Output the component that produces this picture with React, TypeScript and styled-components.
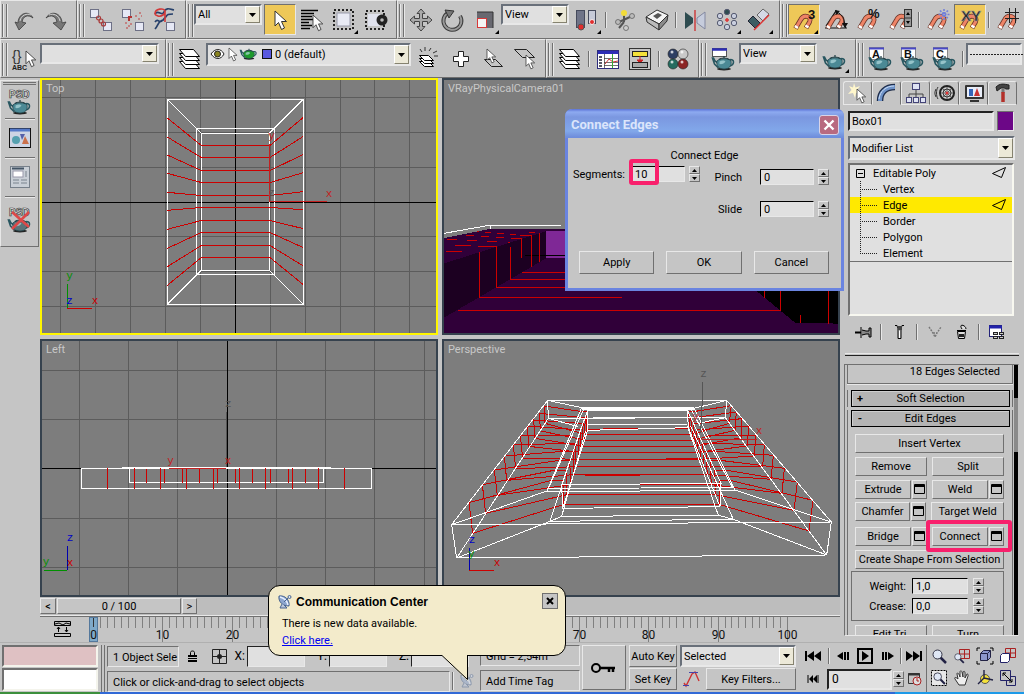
import React from "react";
import styled, { createGlobalStyle, css } from "styled-components";

const c = {
  face: "#c5c5c5",
  field: "#e0e0e0",
  light: "#e8e8e8",
  dark: "#707070",
  amber: "#eec858",
  pink: "#f8206c",
};

const GlobalStyle = createGlobalStyle`
  * { box-sizing: border-box; }
  body { margin: 0; background: ${c.face}; overflow: hidden; }
  body, button, input, select {
    font-family: Roboto, "Liberation Sans", Arial, sans-serif;
    font-size: 11px;
    line-height: 13px;
    color: #000;
  }
  button { padding: 0; margin: 0; white-space: nowrap; }
  input { min-width: 0; }
  svg { display: block; flex: none; }
`;

const raised = css`
  border: 1px solid;
  border-color: ${c.light} ${c.dark} ${c.dark} ${c.light};
`;
const sunken = css`
  border: 1px solid;
  border-color: ${c.dark} ${c.light} ${c.light} ${c.dark};
`;

/* ---------- frame ---------- */

const Window = styled.div`
  position: relative;
  display: flex;
  flex-direction: column;
  height: 100vh;
  min-height: 640px;
  background: ${c.face};
`;
const ToolRow = styled.div`
  display: flex;
  height: 39px;
  flex: none;
  overflow: hidden;
`;
const ToolGroup = styled.div<{ $grow?: boolean }>`
  display: flex;
  align-items: flex-start;
  flex: ${(p) => (p.$grow ? "1 1 0" : "none")};
  min-width: 0;
  padding: 3px 4px 0 1px;
  border: 1px solid;
  border-color: ${c.light} ${c.dark} ${c.dark} ${c.light};
  &:last-child { padding-right: 0; border-right: 0; }
`;
const Grip = styled.span`
  flex: none;
  width: 5px;
  height: 33px;
  margin-right: 1px;
  border: 1px solid ${c.dark};
  border-width: 0 1px;
  box-shadow: inset 1px 0 ${c.light}, 1px 0 ${c.light};
`;
const ToolButton = styled.button<{ $on?: boolean; $fly?: boolean }>`
  position: relative;
  display: flex;
  align-items: center;
  justify-content: center;
  flex: none;
  width: 32px;
  height: 31px;
  background: ${(p) => (p.$on ? c.amber : "transparent")};
  border: 1px solid;
  border-color: ${(p) => (p.$on ? `${c.dark} ${c.light} ${c.light} ${c.dark}` : "transparent")};
  ${(p) =>
    p.$fly &&
    css`
      &::after {
        content: "";
        position: absolute;
        right: 1px;
        bottom: 0;
        border: 2px solid;
        border-color: transparent #000 #000 transparent;
      }
    `}
`;
const Divider = styled.span<{ $h?: number }>`
  flex: none;
  width: 2px;
  height: ${(p) => p.$h ?? 16}px;
  margin: ${(p) => (p.$h ? "0 2px" : "8px 2px 0")};
  border-left: 1px solid ${c.dark};
  border-right: 1px solid ${c.light};
`;
const SelectBox = styled.label<{ $w?: number; $h?: number }>`
  display: flex;
  align-items: stretch;
  flex: ${(p) => (p.$w ? "none" : "1 1 0")};
  width: ${(p) => (p.$w ? p.$w + "px" : "auto")};
  min-width: 0;
  height: ${(p) => p.$h ?? 21}px;
  margin-right: 2px;
  background: ${c.field};
  border: 2px solid;
  border-color: #69707a ${c.light} ${c.light} #69707a;
`;
const NativeSelect = styled.select`
  flex: 1 1 0;
  min-width: 0;
  padding: 0 0 0 2px;
  appearance: none;
  border: 0;
  background: transparent;
  outline: 0;
`;
const Arrow = styled.span`
  display: flex;
  align-items: center;
  justify-content: center;
  flex: none;
  width: 15px;
  background: #ece9d8;
  border: 1px solid;
  border-color: #fff #85826f #85826f #fff;
`;

function Drop({ label, value, w, h, children }: { label: string; value: string; w?: number; h?: number; children?: React.ReactNode }) {
  return (
    <SelectBox $w={w} $h={h}>
      {children}
      <NativeSelect aria-label={label} defaultValue={value}>
        <option>{value}</option>
      </NativeSelect>
      <Arrow>
        <svg width="7" height="4" viewBox="0 0 7 4"><path d="M0 0h7L3.500 4z" /></svg>
      </Arrow>
    </SelectBox>
  );
}

/* ---------- icons ---------- */

const IconSvg = styled.svg`
  overflow: visible;
  text { font-family: "Liberation Sans", Arial, sans-serif; }
`;
const I = ({ children, s = 24, h }: { children: React.ReactNode; s?: number; h?: number }) => (
  <IconSvg width={s} height={h ?? s} viewBox={`0 0 ${s} ${h ?? s}`} fill="none" aria-hidden="true">{children}</IconSvg>
);
const Cursor = ({ x = 0, y = 0, k = 1 }: { x?: number; y?: number; k?: number }) => (
  <path transform={`translate(${x} ${y}) scale(${k})`} d="M0 0v15l3.500-3.500 3 7 3-1.500-3-6.500h5z" fill="#fff" stroke="#333" strokeWidth="1" />
);
const Magnet = () => (
  <g>
    <path d="M3.500 20.500L8.500 12C12 5.500 20.500 8.500 17.500 14L14 20" stroke="#6b3528" strokeWidth="4.800" />
    <path d="M3.800 20L8.500 12C12 5.500 20.500 8.500 17.500 14L14.300 19.500" stroke="#ee8467" strokeWidth="3.200" />
    <path d="M3.800 20l1.200-2M14.300 19.500l1.200-2" stroke="#fff" strokeWidth="3.600" />
  </g>
);
const Teapot = ({ x = 0, y = 0, fill = "#4b8995" }: { x?: number; y?: number; fill?: string }) => (
  <g transform={`translate(${x} ${y})`}>
    <ellipse cx="12" cy="14" rx="7" ry="1.500" fill="#222" />
    <path d="M6 8L3 6 1.500 3 .5 3l2 6 4 4M17 5c6-2 6 5 0 6" stroke="#285660" strokeWidth="1.600" />
    <path d="M5 6c2-3 12-3 14 0 1 5-2 8-7 8s-8-3-7-8z" fill={fill} stroke="#24464e" strokeWidth=".8" />
    <path d="M7 4.500c2-2 8-2 10 0M12 1v2" stroke="#1c3a42" strokeWidth="1.200" />
    <path d="M7.500 6.500c2-1.500 5-1.500 6 0-1 2-4 3-6 2.500z" fill="#b5dbe0" opacity=".7" />
  </g>
);
const Cube = ({ x, y, s = 8 }: { x: number; y: number; s?: number }) => (
  <rect x={x + 0.5} y={y + 0.5} width={s} height={s} fill="#e6e8f5" stroke="#6d7086" />
);
const Sheets = () => (
  <g stroke="#000" fill="#fff">
    {[14, 10, 6, 2].map((y) => <path key={y} d={`M1.500 ${y}.5h14l6 7h-14z`} />)}
  </g>
);

const ic = {
  undo: <I><path d="M6 15C6 6 16 1 21 10c-5-4-10-2-11 4l4 1-7 7-4-8z" fill="#777" stroke="#3c3c3c" strokeWidth=".8" /><path d="M8 13c1-6 7-8 11-6" stroke="#d0d0d0" /></I>,
  redo: <I><path d="M18 15C18 6 8 1 2 10c5-4 10-2 11 4l-4 1 8 7 5-8z" fill="#777" stroke="#3c3c3c" strokeWidth=".8" /><path d="M16 13c-1-6-7-8-11-6" stroke="#d0d0d0" /></I>,
  link: <I><Cube x={1} y={1} /><Cube x={14} y={14} /><g stroke="#a93a3a" strokeWidth="1.200"><circle cx="9.500" cy="10" r="2" /><circle cx="12" cy="13" r="2" /><circle cx="14.500" cy="16" r="2" /></g></I>,
  unlink: <I><Cube x={1} y={1} /><Cube x={14} y={14} /><path d="M8 13V9h3" stroke="#b53333" strokeWidth="2" /><path d="M14 8h2m2-3h2m-3 6h2m1-3h1M4 15h2m1 3h2m-4 2h2m2-4h2" stroke="#c26b6b" strokeWidth="1.500" /></I>,
  bind: <I><path d="M2 6c3-5 7 3 9-2s6-3 10-2M2 14c4-5 3 3 8-2s3-6 10-6M2 21c4-4 3-9 9-9" stroke="#26406b" strokeWidth="1.700" /><path d="M2 6c0-6 9-6 10-3s-4 6-7 5-3-1-3-2m10-3v11" stroke="#d33939" strokeWidth="1.600" /><Cube x={13} y={14} s={8} /></I>,
  arrow: <I><Cursor x={7} y={3} /></I>,
  byName: <I><path d="M1 2.500h17M1 5.500h13M1 8.500h11M1 11.500h13M1 14.500h8M1 17.500h11M1 20.500h9" stroke="#000" strokeWidth="1.300" /><Cursor x={13} y={7} k={0.85} /></I>,
  region: <I><rect x="2" y="2" width="19" height="19" stroke="#222" strokeWidth="2" strokeDasharray="2 2" /><rect x="5" y="5" width="13" height="13" fill="#e8eaf4" stroke="#9a9cac" /></I>,
  crossing: <I><rect x="2" y="3" width="18" height="18" stroke="#222" strokeWidth="2" strokeDasharray="2 2" /><rect x="4" y="6" width="12" height="12" fill="#dfe1ec" /><circle cx="18" cy="12" r="5.500" fill="#222" /><circle cx="18" cy="12" r="1.800" fill="#bbb" /></I>,
  move: <I><path d="M12 1l4 4.500h-2.500V10.500h5V8l4.500 4-4.500 4v-2.500h-5v5H16L12 23l-4-4.500h2.500v-5h-5V16L1 12l4.500-4v2.500h5v-5H8z" fill="#aaa" stroke="#444" /></I>,
  rotate: <I><path d="M7 5a9 9 0 1 0 12 3" stroke="#3c3c3c" strokeWidth="4" /><path d="M7 5a9 9 0 1 0 12 3" stroke="#999" strokeWidth="2" /><path d="M4 2l9 1-5 7z" fill="#777" stroke="#333" /></I>,
  scale: <I><rect x="4" y="4" width="16" height="16" fill="#686870" /><path d="M4 4h16v16" stroke="#333" /><rect x="4.500" y="10.500" width="9" height="9" fill="#f4f4f4" stroke="#d83838" /></I>,
  pivot: <I><rect x="1.500" y="2.500" width="8" height="17" fill="#6f7488" stroke="#454a5c" /><rect x="13.500" y="2.500" width="7" height="13" fill="#c6cad8" stroke="#454a5c" /><circle cx="6" cy="19" r="3" fill="#e12d2d" stroke="#555" /><circle cx="17" cy="14" r="2.500" fill="#e12d2d" stroke="#eee" /></I>,
  manip: <I><path d="M11 5v9M6 20l5-6M4 15l15-7" stroke="#555" strokeWidth="2" /><circle cx="11" cy="5" r="3" fill="#f2dc3a" /><circle cx="19" cy="8" r="2.500" fill="#bbb" stroke="#555" strokeWidth=".7" /><circle cx="5" cy="14" r="2.500" fill="#bbb" stroke="#555" strokeWidth=".7" /><circle cx="13" cy="20" r="2.500" fill="#ccc" stroke="#555" strokeWidth=".7" /></I>,
  keyb: <I><path d="M1 9L12 2l11 5-9 9z" fill="#f4f4f4" stroke="#333" /><path d="M1 9l13 7v6L2 14z" fill="#bbb" stroke="#333" /><path d="M14 16l9-9-1 6-8 9z" fill="#8b8b8b" stroke="#333" /><path d="M8 8l5-3 4 2-5 4z" fill="#555" /></I>,
  mirror: <I><path d="M2 4l8 6v5l-8 6z" fill="#2e4c50" /><path d="M22 4l-8 6v5l8 6z" fill="#c6ccdc" stroke="#8388a0" /><path d="M12 2v21" stroke="#cc2a2a" strokeWidth="1.300" /></I>,
  array: <I>{[[12, 4], [19, 8], [19, 15], [12, 19], [5, 15], [5, 8]].map(([x, y], i) => <circle key={i} cx={x} cy={y} r="2.700" fill={i ? "#c9cede" : "#2e4c50"} stroke="#555a70" />)}<path d="M12 10v4m-2-2h4" stroke="#d33" strokeWidth="1.500" /></I>,
  align: <I><path d="M1 13l5-5 7 7-5 5z" fill="#3d5d64" stroke="#223" /><path d="M10 7l6-6 6 5-6 7z" fill="#d5d9e6" stroke="#666" /><path d="M7 22L22 7" stroke="#d33" strokeWidth="1.400" /></I>,
  snap: <I><Magnet /><text x="16" y="11" fontSize="13" fontWeight="700" fill="#111">3</text></I>,
  angle: <I><path d="M1 20h21L12 3 2 18" stroke="#111" strokeWidth="1.200" /><Magnet /><path d="M13 4c5 2 8 8 8 15" stroke="#111" /><path d="M11 2l5 1-4 4zM18 15h6l-3 5z" fill="#111" /></I>,
  percent: <I><Magnet /><text x="12" y="10" fontSize="13" fontWeight="700" fill="#111">%</text></I>,
  spinner: <I><Magnet /><rect x="16.500" y="1.500" width="7" height="17" fill="#999" stroke="#333" /><path d="M17 10h6" stroke="#333" /><path d="M18 7l2-3 2 3zM18 13h4l-2 3z" fill="#000" /></I>,
  snow: <I><Magnet /><path d="M18 1v11M12.500 6.500h11M14 2.500l8 8M22 2.500l-8 8" stroke="#7480d8" strokeWidth="1.600" strokeDasharray="2 1" /></I>,
  xy: <I><Magnet /><text x="3" y="13" fontSize="15" fontWeight="700" fill="#222" stroke="#9a9a9a" strokeWidth=".6">XY</text></I>,
  gridSnap: <I><Magnet /><path d="M9 4.500h14M9 10.500h14M13.500 0v15M19.500 0v15" stroke="#222" /></I>,
  macro: <I><text x="0" y="14" fontSize="14" fill="#333">{"{}"}</text><text x="0" y="23" fontSize="7" fontWeight="700" fill="#222">ABC</text><Cursor x={14} y={4} k={0.85} /></I>,
  sheets: <I><Sheets /></I>,
  newLayer: <I><g stroke="#000" fill="#fff" transform="translate(0 2)">{[12, 9, 6].map((y) => <path key={y} d={`M2.500 ${y}.5h9l5 5h-9z`} />)}</g><path d="M5 5L3 2m5 2V0m4 4l2-3m2 5l4-2m-3 5h4" stroke="#333" /></I>,
  plus: <I><path d="M9.500 4.500h5v5h5v5h-5v5h-5v-5h-5v-5h5z" fill="#fff" stroke="#222" /></I>,
  pickLayer: <I><path d="M3.500 12.500h11l7 7h-11z" stroke="#222" /><Cursor x={6} y={2} k={0.75} /></I>,
  curLayer: <I><path d="M1.500 2.500h12l8 8h-12z" stroke="#222" /><Cursor x={13} y={8} k={0.75} /></I>,
  curves: <I><rect x="1.500" y="3.500" width="21" height="18" fill="#fff" stroke="#2d2d7d" /><path d="M2 5.500h20" stroke="#2d2db5" strokeWidth="3" /><path d="M3 10h3m-3 3h3m-3 3h3m-3 3h3" stroke="#223" strokeWidth="1.500" /><path d="M8.500 7v14M8 11.500h14M8 15.500h14M8 18.500h14" stroke="#333" strokeWidth=".7" /><path d="M9 17l4-5 4 3 5-1" stroke="#c33" /><path d="M16.500 7v14" stroke="#3a3" /></I>,
  schematic: <I><rect x="1.500" y="1.500" width="21" height="21" stroke="#333" /><rect x="4.500" y="4.500" width="15" height="5" fill="#f5e23a" stroke="#222" /><path d="M12 9v4m-3 0h6l-3 3z" stroke="#c22" fill="#c22" /><rect x="4.500" y="15.500" width="15" height="5" fill="#aaa" stroke="#222" /></I>,
  material: <I>{[[7, 7, "#2d3e63"], [17, 7, "#c9c9c9"], [7, 17, "#256c60"], [17, 17, "#8c2424"]].map(([x, y, f]) => <g key={`${x}-${y}`}><circle cx={x} cy={y} r="5" fill={f as string} stroke="#222" strokeWidth=".6" /><circle cx={(x as number) - 1} cy={(y as number) - 2} r="1.500" fill="#fff" opacity=".75" /></g>)}</I>,
  render: <I><rect x="1.500" y="1.500" width="14" height="8" fill="#fff" stroke="#555" /><path d="M1 2.500h15" stroke="#2d2db5" strokeWidth="2.500" /><Teapot x={1} y={8} /></I>,
  teapot: <I><Teapot y={7} /></I>,
};
const preset = (l: string) => (
  <I><rect x="1.500" y=".5" width="14" height="12" fill="#fff" stroke="#888" /><path d="M1 1.500h15" stroke="#4848c8" strokeWidth="2" /><Teapot x={1} y={8} /><text x="4" y="11" fontSize="11" fontWeight="700" fill="#111">{l}</text></I>
);

const Tool = ({ n, on, fly, children }: { n: string; on?: boolean; fly?: boolean; children: React.ReactNode }) => (
  <ToolButton aria-label={n} $on={on} $fly={fly}>{children}</ToolButton>
);

/* ---------- work area ---------- */

const Work = styled.main`
  display: grid;
  grid-template-columns: 40px minmax(0, 1fr) 184px;
  flex: 1 1 0;
  min-height: 0;
`;
const SideBar = styled.aside`
  align-self: start;
  display: flex;
  flex-direction: column;
  align-items: center;
  height: 167px;
  margin: 2px 1px 0 0;
  border: 1px solid;
  border-color: ${c.light} ${c.dark} ${c.dark} ${c.light};
`;
const SideGrip = styled.span`
  width: 33px;
  height: 3px;
  margin-top: 1px;
  border: 1px solid ${c.dark};
  border-width: 1px 0;
`;
const SideButton = styled.button`
  display: flex;
  align-items: center;
  justify-content: center;
  width: 30px;
  height: 39px;
  border: 0;
  border-bottom: 1px solid ${c.dark};
  box-shadow: 0 1px ${c.light};
  background: transparent;
  &:first-of-type { height: 34px; }
  &:last-child { border: 0; box-shadow: none; height: 46px; }
`;
const Center = styled.section`
  position: relative;
  display: flex;
  flex-direction: column;
  min-width: 0;
`;
const Views = styled.div`
  display: grid;
  grid-template: minmax(0, 257fr) minmax(0, 258fr) / 1fr 1fr;
  gap: 4px;
  flex: 1 1 0;
  min-height: 0;
`;
const View = styled.figure<{ $active?: boolean }>`
  position: relative;
  margin: 0;
  min-width: 0;
  overflow: hidden;
  background: #7d7d7d;
  border: 2px solid ${(p) => (p.$active ? "#fff600" : "#36424e")};
  > svg { width: 100%; height: 100%; }
`;
const ViewName = styled.figcaption`
  position: absolute;
  left: 4px;
  top: 2px;
  color: #c8c8c8;
`;
const Axis = styled.text`
  font: 33px "Liberation Mono", monospace;
  text-anchor: middle;
`;
const WHITE = { stroke: "#fff", strokeWidth: 3, fill: "none" };
const RED = { stroke: "#cc0000", strokeWidth: 3, fill: "none" };

const lerpX = (a: number[], b: number[], y: number) => a[0] + ((b[0] - a[0]) * (y - a[1])) / (b[1] - a[1]);

function Scene({ box, children }: { box: string; children: React.ReactNode }) {
  return (
    <svg viewBox={box} preserveAspectRatio="xMidYMid slice" shapeRendering="crispEdges" aria-hidden="true">{children}</svg>
  );
}

function TopView() {
  const inner = [208, 244, 283, 319, 358, 394, 433, 469, 508, 544];
  const outer = [126, 183, 237, 292, 349, 403, 460, 517, 572, 628];
  return (
    <View $active>
      <Scene box="126 12 1182 759">
        <g stroke="#5c5c5c" strokeWidth="3">
          {[181, 286, 391, 496, 601, 811, 916, 1021, 1123, 1228].map((x) => <path key={x} d={`M${x}.5 0V800`} />)}
          {[64, 169, 274, 481, 586, 691].map((y) => <path key={y} d={`M0 ${y}.5H1320`} />)}
        </g>
        <path d="M706.500 0V800M0 379.500H1320" stroke="#000" strokeWidth="3" />
        <g {...WHITE}>
          <path d="M502.500 70.500H910.500V685.500H502.500zM589.500 157.500H823.500V595.500H589.500zM604.500 172.500H808.500V583.500H604.500z" />
          <path d="M502 70L604 172M910 70L808 172M502 685L604 583M910 685L808 583" />
        </g>
        <g {...RED}>
          {inner.map((y, i) => <path key={y} d={`M502 ${outer[i]}L604 ${y}.5H810L910 ${outer[i] - 2}`} />)}
          <path d="M808.500 205V376.500H981" stroke="#c42020" />
        </g>
        <Axis x="815" y="188" fill="#c42020">y</Axis>
        <Axis x="987" y="363" fill="#c42020">x</Axis>
        <Axis x="815" y="361" fill="#555">z</Axis>
        <path d="M202.500 624V697" stroke="#009000" strokeWidth="3" />
        <path d="M202 697.500H276" stroke="#c00" strokeWidth="3" />
        <Axis x="209" y="608" fill="#009000">y</Axis>
        <Axis x="209" y="684" fill="#0000c8">z</Axis>
        <Axis x="285" y="684" fill="#c00">x</Axis>
      </Scene>
      <ViewName>Top</ViewName>
    </View>
  );
}

function CameraView() {
  return (
    <View>
      <Scene box="312 12 1182 759">
        <path d="M300 489L450 459H1500V780H300z" fill="#300039" />
        <path d="M300 566L620 465V546L300 732z" fill="#1c0021" />
        <path d="M618 465H1494V546H618z" fill="#7f2896" />
        <path d="M555 539H1494" stroke="#000" strokeWidth="3" />
        <path d="M1250 645L1365 740L1500 743V645z" fill="#000" />
        <path d="M312 472L445 448.500H663M451.500 448V459" {...WHITE} />
        <g {...RED}>
          <path d="M354 703.500H1321.500V645M418.500 528V664.500H846M414 511.500H469.500V634.500H900M511.500 513V610.500H900M546 589.500H900M514 487.500H544.500V546M541 478.500H574.500V573M598.500 470V559" />
          <path d="M320 490.500H351M378 478.500H402M411 466.500H417M345 508.500H393M318 526.500H366M381 493.500H411M423 481.500H447M435 469.500H453M441 496.500H471M468 484.500H492M471 472.500H492M510 475.500H528M567 469.500H585M504 499.500H511" />
          <path d="M1273.500 645V667M1465.500 645V743M1381.500 717V740" />
        </g>
      </Scene>
      <ViewName>VRayPhysicalCamera01</ViewName>
    </View>
  );
}

function LeftView() {
  return (
    <View>
      <Scene box="126 15 1182 762">
        <g stroke="#5c5c5c" strokeWidth="3">
          {[238, 385, 532, 829, 976, 1123, 1273].map((x) => <path key={x} d={`M${x}.5 0V800`} />)}
          {[103, 250, 547, 694].map((y) => <path key={y} d={`M0 ${y}.5H1320`} />)}
        </g>
        <path d="M682.500 0V800M0 397.500H1320" stroke="#000" strokeWidth="3" />
        <path d="M679.500 228V397" stroke="#555" strokeWidth="3" />
        <path d="M244.500 397.500H1114.500V457.500H244.500zM388.500 397.500H970.500V439.500H388.500zM366 394.500H993" {...WHITE} />
        <g {...RED}>
          {[322, 403, 481, 559, 640, 718, 796, 877, 955, 1033].map((x) => <path key={x} d={`M${x}.5 396V458`} />)}
          {[439, 493, 547, 598, 652, 706, 757, 811, 865, 916].map((x) => <path key={x} d={`M${x}.5 399V440`} />)}
          <path d="M508 397.500H679" stroke="#c42020" />
        </g>
        <Axis x="512" y="383" fill="#c42020">y</Axis>
        <Axis x="684" y="384" fill="#c42020">x</Axis>
        <Axis x="685" y="213" fill="#555">z</Axis>
        <path d="M202.500 630V703" stroke="#0000b0" strokeWidth="3" />
        <path d="M132 703.500H202" stroke="#009000" strokeWidth="3" />
        <Axis x="138" y="688" fill="#009000">y</Axis>
        <Axis x="210" y="690" fill="#c00">x</Axis>
        <Axis x="210" y="615" fill="#0000c8">z</Axis>
      </Scene>
      <ViewName>Left</ViewName>
    </View>
  );
}

const LT = [[312, 210], [297, 232], [281, 252], [262, 270], [241, 298], [220, 327], [193, 360], [163, 402], [127, 446], [87, 500]];
const LB = [[315, 262], [302, 285], [285, 307], [266, 331], [248, 366], [227, 398], [200, 433], [172, 478], [137, 532], [98, 592]];
const RT = [[874, 209], [889, 228], [905, 248], [927, 270], [948, 298], [973, 327], [1000, 358], [1033, 397], [1072, 438], [1119, 493]];
const RB = [[868, 262], [885, 283], [903, 305], [921, 330], [942, 360], [968, 392], [993, 430], [1026, 472], [1062, 523], [1107, 585]];
const RIM = [226, 243, 261, 280, 300, 322, 346, 373, 402, 433];
const FLOOR = [296, 312, 330, 349, 370, 392, 416, 446, 476, 505];

function PerspectiveView() {
  return (
    <View>
      <Scene box="12 15 1182 762">
        <g {...RED}>
          {RIM.map((y, i) => {
            const f = FLOOR[i];
            const rl = lerpX([425, 215], [320, 465], y);
            const rr = lerpX([762, 217], [885, 462], y);
            const il = lerpX([443, 222], [365, 443], y);
            const ir = lerpX([742, 222], [843, 442], y);
            const fl = lerpX([443, 283], [368, 517], f);
            const fr = lerpX([745, 275], [840, 512], f);
            return (
              <path
                key={y}
                d={`M${fl} ${f}L${LB[i]}L${LT[i]}L${rl} ${y}H${il}L${fl} ${f}H${fr}L${RB[i]}L${RT[i]}L${rr} ${y}H${ir}L${fr} ${f}`}
              />
            );
          })}
          <path d="M443 280L745 277M505 313H700M540 331H648M678 367H780M435 417H600M385 446H840" strokeWidth="4" />
        </g>
        <g {...WHITE}>
          <path d="M35 566L323 193H860L1174 558zM50 666L35 566M1174 558L1160 657L50 666L325 247L856 245L1160 657M323 193L325 247M860 193L856 245" />
          <path d="M323 193L425 215M860 193L762 217M35 566L320 465M1174 558L885 462M50 666L330 556M1160 657L880 550M325 247L415 272M856 245L775 262" />
          <path d="M320 467L425 215M762 217L885 462M320 459L885 453M320 467L885 463M325 458L432 218M878 455L752 218" />
          <path d="M425 217H762" strokeWidth="7" />
          <path d="M365 446L443 222H742L843 442zM368 517L443 283M745 275L840 512L368 517L365 446M840 512L843 442M443 222V283L745 275L742 222" />
          <path d="M330 556L880 550L835 538L365 541zM330 556L425 270M365 541L437 285M880 550L752 270M835 538L742 270M460 244H742M443 265H742" />
        </g>
        <path d="M787.500 138V180L782 290" stroke="#555" strokeWidth="3" fill="none" />
        <path d="M785 310.500H951" stroke="#c42020" strokeWidth="3" />
        <Axis x="791" y="123" fill="#555">z</Axis>
        <Axis x="957" y="293" fill="#c42020">x</Axis>
        <Axis x="767" y="253" fill="#c42020">y</Axis>
        <path d="M88.500 635V703" stroke="#0000b0" strokeWidth="3" />
        <path d="M88 703.500H161" stroke="#c00" strokeWidth="3" />
        <Axis x="96" y="620" fill="#0000c8">z</Axis>
        <Axis x="95" y="663" fill="#009000">y</Axis>
        <Axis x="171" y="690" fill="#c00">x</Axis>
      </Scene>
      <ViewName>Perspective</ViewName>
    </View>
  );
}

const Slider = styled.div`
  display: flex;
  flex: none;
  gap: 1px;
  height: 19px;
  padding: 1px 0;
  background: #bdbdbd;
  border-bottom: 1px solid ${c.light};
`;
const SliderButton = styled.button<{ $w: number }>`
  ${raised}
  width: ${(p) => p.$w}px;
  background: ${c.face};
`;
const TrackBar = styled.div`
  display: flex;
  flex: none;
  height: 26px;
  border-top: 1px solid ${c.dark};
`;
const CurveToggle = styled.button`
  display: flex;
  align-items: center;
  justify-content: center;
  flex: none;
  width: 44px;
  border: 0;
  background: transparent;
`;
const Ruler = styled.svg`
  flex: 1 1 0;
  min-width: 0;
  height: 25px;
  text { font-size: 12px; text-anchor: middle; fill: #111; }
`;

function TimeRuler() {
  const x = (f: number) => Math.round(9 + f * 6.94) + 0.5;
  return (
    <Ruler viewBox="0 0 756 25" preserveAspectRatio="xMinYMin meet" aria-label="Track bar">
      <g shapeRendering="crispEdges" stroke="#808080">
        {Array.from({ length: 101 }, (_, f) => (
          <path key={f} d={`M${x(f)} 0V${f % 10 ? 11 : 25}`} />
        ))}
      </g>
      <rect x="5.500" y=".5" width="8" height="24" fill="#7fa9c8" stroke="#54789c" />
      <path d="M9.500 1v9" stroke="#333" />
      {Array.from({ length: 11 }, (_, i) => (
        <text key={i} x={x(i * 10)} y="22">{i * 10}</text>
      ))}
    </Ruler>
  );
}

/* ---------- dialog ---------- */

const Dialog = styled.form`
  position: absolute;
  right: -4px;
  top: 31px;
  z-index: 2;
  width: 279px;
  height: 182px;
  display: flex;
  flex-direction: column;
  background: ${c.face};
  border: 3px solid #6a84e0;
  border-top: 0;
  border-radius: 7px 7px 0 0;
`;
const DialogTitle = styled.header`
  display: flex;
  align-items: center;
  justify-content: space-between;
  flex: none;
  height: 29px;
  margin: 0 -3px;
  padding: 3px 5px 0 6px;
  border-radius: 7px 7px 0 0;
  background: linear-gradient(#5b72d6 0, #8daaf0 3px, #7b97e0 8px, #82a8ea 22px, #6f8edc 28px);
  color: #dbe5fb;
  font-weight: 700;
  font-size: 13px;
  line-height: 16px;
`;
const CloseX = styled.button`
  display: flex;
  align-items: center;
  justify-content: center;
  width: 20px;
  height: 20px;
  border: 1px solid #d8d4e8;
  border-radius: 3px;
  background: #b86a80;
`;
const DialogBody = styled.div`
  display: grid;
  grid-template-columns: 58px 70px 1fr auto;
  grid-template-rows: 16px 24px 36px;
  align-items: center;
  padding: 9px 12px 0 5px;
  row-gap: 2px;
`;
const Caption = styled.h2`
  grid-column: 1 / -1;
  margin: 0 0 0 7px;
  text-align: center;
  font-size: 11px;
  font-weight: 400;
`;
const Label = styled.label<{ $col?: number }>`
  grid-column: ${(p) => p.$col ?? "auto"};
  justify-self: ${(p) => (p.$col ? "end" : "start")};
  margin-right: ${(p) => (p.$col ? 18 : 0)}px;
  margin-bottom: ${(p) => (p.$col ? 0 : 6)}px;
`;
const SpinField = styled.span<{ $lift?: boolean }>`
  position: relative;
  display: flex;
  align-items: center;
  gap: 4px;
  margin-bottom: ${(p) => (p.$lift ? 6 : 0)}px;
`;
const NumInput = styled.input<{ $w: number }>`
  width: ${(p) => p.$w}px;
  height: 16px;
  padding: 0 3px;
  background: ${c.field};
  border: 1px solid;
  border-color: #000 ${c.light} ${c.light} #000;
  border-radius: 0;
`;
const Spins = styled.span`
  display: grid;
  width: 11px;
  height: 16px;
`;
const SpinBtn = styled.button`
  ${raised}
  display: flex;
  align-items: center;
  justify-content: center;
  background: ${c.face};
  height: 8px;
`;
const Spinner = () => (
  <Spins>
    <SpinBtn type="button" aria-label="Increase"><svg width="5" height="3"><path d="M0 3h5L2.500 0z" /></svg></SpinBtn>
    <SpinBtn type="button" aria-label="Decrease"><svg width="5" height="3"><path d="M0 0h5L2.500 3z" /></svg></SpinBtn>
  </Spins>
);
const Mark = styled.span`
  position: absolute;
  left: -2px;
  top: -7px;
  width: 30px;
  height: 26px;
  border: 4px solid ${c.pink};
  border-radius: 3px;
  pointer-events: none;
`;
const DialogButtons = styled.div`
  display: flex;
  gap: 12px;
  margin: auto 12px 14px 11px;
`;
const PushButton = styled.button<{ $h?: number }>`
  ${raised}
  flex: 1 1 0;
  min-width: 0;
  height: ${(p) => p.$h ?? 19}px;
  background: ${c.face};
  overflow: hidden;
`;

function ConnectDialog() {
  return (
    <Dialog aria-label="Connect Edges" onSubmit={(e) => e.preventDefault()}>
      <DialogTitle>
        Connect Edges
        <CloseX type="button" aria-label="Close">
          <svg width="12" height="12" viewBox="0 0 12 12"><path d="M1.500 1.500l9 9m0-9l-9 9" stroke="#fff" strokeWidth="2.400" /></svg>
        </CloseX>
      </DialogTitle>
      <DialogBody>
        <Caption>Connect Edge</Caption>
        <Label htmlFor="seg">Segments:</Label>
        <SpinField $lift>
          <NumInput id="seg" $w={54} defaultValue="10" />
          <Spinner />
          <Mark />
        </SpinField>
        <Label htmlFor="pinch" $col={3}>Pinch</Label>
        <SpinField><NumInput id="pinch" $w={54} defaultValue="0" /><Spinner /></SpinField>
        <Label htmlFor="slide" $col={3}>Slide</Label>
        <SpinField><NumInput id="slide" $w={54} defaultValue="0" /><Spinner /></SpinField>
      </DialogBody>
      <DialogButtons>
        <PushButton $h={23}>Apply</PushButton>
        <PushButton $h={23}>OK</PushButton>
        <PushButton $h={23}>Cancel</PushButton>
      </DialogButtons>
    </Dialog>
  );
}

/* ---------- command panel ---------- */

const Panel = styled.aside`
  position: relative;
  display: flex;
  flex-direction: column;
  min-width: 0;
  min-height: 0;
  padding-top: 3px;
`;
const Tabs = styled.nav`
  display: flex;
  flex: none;
  height: 25px;
  padding-left: 3px;
`;
const Tab = styled.button<{ $on?: boolean }>`
  display: flex;
  align-items: center;
  justify-content: center;
  width: 29px;
  height: 24px;
  background: ${c.face};
  border: 1px solid;
  border-color: ${c.light} ${c.dark} ${(p) => (p.$on ? c.face : c.light)} ${c.light};
  border-radius: 3px 3px 0 0;
`;
const NameRow = styled.div`
  display: flex;
  gap: 3px;
  flex: none;
  height: 20px;
  margin: 5px 10px 0 8px;
`;
const NameInput = styled.input`
  flex: 1 1 0;
  padding: 0 2px;
  background: ${c.field};
  border: 2px solid;
  border-color: #222 ${c.light} ${c.light} #222;
`;
const Swatch = styled.button`
  width: 17px;
  background: #6c0787;
  ${sunken}
`;
const ListRow = styled.div`
  display: flex;
  flex: none;
  margin: 5px 7px 0 8px;
`;
const Stack = styled.ul`
  flex: none;
  height: 153px;
  margin: 3px 10px 0 8px;
  padding: 0;
  list-style: none;
  background: ${c.field};
  border: 2px solid;
  border-color: ${c.dark} #f8f8f0 #f8f8f0 ${c.dark};
`;
const StackRow = styled.li<{ $on?: boolean; $child?: boolean; $last?: boolean }>`
  display: flex;
  align-items: center;
  gap: ${(p) => (p.$child ? 6 : 8)}px;
  height: ${(p) => (p.$last ? 17 : 16)}px;
  padding: 0 5px 0 ${(p) => (p.$child ? 10 : 6)}px;
  background: ${(p) => (p.$on ? "#ffe900" : "transparent")};
  ${(p) => p.$last && css`border-bottom: 1px solid ${c.dark};`}
  > span { flex: 1; }
`;
const ToolsRow = styled.div`
  display: flex;
  align-items: center;
  flex: none;
  height: 24px;
  margin: 4px 16px 0 12px;
  justify-content: space-between;
`;
const PlainButton = styled.button<{ $w?: number }>`
  display: flex;
  align-items: center;
  justify-content: center;
  flex: none;
  width: ${(p) => p.$w ?? 22}px;
  height: 22px;
  border: 0;
  background: transparent;
`;
const Rule = styled.hr`
  flex: none;
  width: 174px;
  height: 3px;
  margin: 9px 0 8px 5px;
  border: 0;
  border-top: 1px solid ${c.light};
  border-bottom: 1px solid #222;
`;
const Rollouts = styled.div`
  display: flex;
  flex: 1 1 0;
  min-height: 0;
  margin: 0 5px 6px 4px;
  overflow: hidden;
  border: 1px solid;
  border-color: ${c.dark} transparent ${c.light} ${c.dark};
`;
const RollBody = styled.div`
  flex: 1 1 0;
  min-width: 0;
  padding: 0 1px 0 2px;
`;
const ScrollTrack = styled.div`
  flex: none;
  width: 4px;
  padding-top: 33px;
  background: #000;
`;
const ScrollThumb = styled.div`
  height: 54px;
  background: #8a8a8a;
`;
const SelectedInfo = styled.div`
  height: 19px;
  padding: 0 12px;
  text-align: right;
  border: 1px solid ${c.dark};
  border-top: 0;
  box-shadow: 0 1px ${c.light};
`;
const RollHead = styled.button`
  display: grid;
  grid-template-columns: 16px 1fr 16px;
  align-items: center;
  width: 159px;
  height: 17px;
  margin: 0 0 0 3px;
  background: #b4b4b4;
  border: 1px solid #000;
  box-shadow: inset 1px 1px #cfcfcf;
`;
const RollTitle = styled.div<{ $gap: number }>`
  display: flex;
  margin-top: ${(p) => p.$gap}px;
  border: 1px solid ${c.dark};
  border-width: 0 1px;
  height: 17px;
`;
const RollGroup = styled.div`
  display: flex;
  flex-direction: column;
  padding: 7px 8px 0 7px;
  border: 1px solid ${c.dark};
  border-width: 0 1px;
`;
const ButtonRow = styled.div<{ $gap?: number }>`
  display: flex;
  gap: 5px;
  margin-bottom: ${(p) => p.$gap ?? 4}px;
`;
const Pair = styled.div`
  position: relative;
  display: flex;
  flex: 1 1 0;
  gap: 1px;
  min-width: 0;
`;
const SettingsButton = styled.button`
  ${raised}
  display: flex;
  align-items: center;
  justify-content: center;
  flex: none;
  width: 15px;
  height: 19px;
  background: ${c.face};
`;
const ConnectMark = styled.span`
  position: absolute;
  inset: -7px -8px -6px -6px;
  border: 4px solid ${c.pink};
  border-radius: 3px;
  pointer-events: none;
`;
const WeightBox = styled.div`
  display: grid;
  grid-template-columns: 54px auto;
  justify-content: start;
  align-items: center;
  gap: 4px 6px;
  height: 50px;
  margin: -2px 0 4px -4px;
  padding: 6px 0;
  border: 1px solid ${c.dark};
  > label { text-align: right; }
`;
const Weights = styled(SpinField)`
  gap: 5px;
`;

const Win = () => (
  <svg width="11" height="11" viewBox="0 0 11 11"><path d="M.5 .5h10v9H.5zM0 2h11" fill="none" stroke="#000" /><path d="M0 1h11v2H0z" /></svg>
);
const WithSettings = ({ n, marked }: { n: string; marked?: boolean }) => (
  <Pair>
    <PushButton>{n}</PushButton>
    <SettingsButton aria-label={`${n} settings`}><Win /></SettingsButton>
    {marked && <ConnectMark />}
  </Pair>
);
const StackFlag = () => (
  <svg width="15" height="12" viewBox="0 0 15 12"><path d="M.5 6.500L13.500 .5L9.500 10.500z" fill="none" stroke="#000" /></svg>
);
const Branch = ({ last }: { last?: boolean }) => (
  <svg width="17" height="16" viewBox="0 0 17 16"><path d={`M.5 0V${last ? 8 : 16}M0 8.500H17`} stroke="#222" strokeDasharray="1 1" /></svg>
);

function CommandPanel() {
  return (
    <Panel>
      <Tabs>
        <Tab aria-label="Create"><I s={20}><path d="M6 0l1.500 4.500L12 3 9 7l4 3-5 0-1 5-2-5-5 1 3.500-4L1 3l4 1.500z" fill="#fff7cc" /><Cursor x={9} y={6} k={0.75} /></I></Tab>
        <Tab $on aria-label="Modify"><I s={20}><path d="M3 18C3 9 9 4 18 4" stroke="#1e2c4a" strokeWidth="6.500" /><path d="M3 18C3 9 9 4 18 4" stroke="#6f93c8" strokeWidth="4" /><path d="M2 16C3 8 9 3 17 3" stroke="#c9dcf5" /></I></Tab>
        <Tab aria-label="Hierarchy"><I s={20}><path d="M10 6v5M3 15v-4h14v4M10 11v4" stroke="#444" /><rect x="6.500" y=".5" width="7" height="6" fill="#dfe3f3" stroke="#447" /><rect x=".5" y="14.500" width="5" height="5" fill="#dfe3f3" stroke="#447" /><rect x="7.500" y="14.500" width="5" height="5" fill="#dfe3f3" stroke="#447" /><rect x="14.500" y="14.500" width="5" height="5" fill="#dfe3f3" stroke="#447" /></I></Tab>
        <Tab aria-label="Motion"><I s={20}><circle cx="12" cy="10" r="7" fill="#d0d0d0" stroke="#222" strokeWidth="2" /><circle cx="12" cy="10" r="4" stroke="#333" /><path d="M12 4v12M6 10h12M8 6l8 8M16 6l-8 8" stroke="#444" strokeWidth=".8" /><circle cx="12" cy="10" r="1.500" fill="#d33" /><path d="M3 4c-2 3-2 9 0 12M1 6c-1.500 3-1.500 5 0 8" stroke="#333" /></I></Tab>
        <Tab aria-label="Display"><I s={20}><rect x="1" y="2" width="19" height="14" rx="1" fill="#333" /><rect x="3" y="4" width="15" height="10" fill="#e9eef9" /><rect x="5" y="6" width="4" height="7" fill="#3565b8" /><path d="M10 13l3-8 3 8z" fill="#c93434" /><path d="M6 18h9" stroke="#333" strokeWidth="2" /></I></Tab>
        <Tab aria-label="Utilities"><I s={20}><path d="M3 4c4-4 8-3 13-2v4h-3l-2-1H8L4 8z" fill="#444" stroke="#222" /><path d="M10 5v5" stroke="#777" strokeWidth="3" /><path d="M10 9v10" stroke="#b3302a" strokeWidth="3.500" /></I></Tab>
      </Tabs>
      <NameRow>
        <NameInput aria-label="Object name" defaultValue="Box01" />
        <Swatch aria-label="Object color" />
      </NameRow>
      <ListRow><Drop label="Modifier List" value="Modifier List" h={24} /></ListRow>
      <Stack>
        <StackRow><I s={9}><path d="M.5 .5h8v8h-8zM2 4.500h5" stroke="#000" /></I><span>Editable Poly</span><StackFlag /></StackRow>
        {["Vertex", "Edge", "Border", "Polygon", "Element"].map((n) => (
          <StackRow key={n} $child $on={n === "Edge"} $last={n === "Element"}>
            <Branch last={n === "Element"} />
            <span>{n}</span>
            {n === "Edge" && <StackFlag />}
          </StackRow>
        ))}
      </Stack>
      <ToolsRow>
        <PlainButton aria-label="Pin stack"><I s={17} h={12}><path d="M0 6.500h6" stroke="#000" strokeWidth="2" /><path d="M6 1v11M7 4l4 1h3V2l2 0v9h-2V8h-3L7 9" stroke="#000" fill="#888" /></I></PlainButton>
        <Divider $h={16} />
        <PlainButton aria-label="Show end result"><I s={9} h={14}><path d="M0 .5h2l1 3v10h3v-10l1-3h2" stroke="#000" /><path d="M2 1h5v4H3z" fill="#444" /><path d="M4 6h1v7H4z" fill="#fff" /></I></PlainButton>
        <Divider $h={16} />
        <PlainButton aria-label="Make unique"><I s={15} h={13}><path d="M1 1l4 6 2 4 2-4 4-6M5 7h4" stroke="#777" strokeDasharray="2 1" strokeWidth="1.400" /></I></PlainButton>
        <PlainButton aria-label="Remove modifier"><I s={11} h={14}><path d="M1.500 6.500h8l-1 7h-6zM1 5.500h9M6 4c-4-6 4-4 4 0" stroke="#000" fill="#ddd" /><path d="M3 9h5v3H3z" fill="#222" /></I></PlainButton>
        <Divider $h={16} />
        <PlainButton aria-label="Configure sets"><I s={16} h={14}><rect x=".5" y=".5" width="12" height="11" fill="#fff" stroke="#227" /><path d="M0 2h13" stroke="#22a" strokeWidth="3" /><g fill="#ccc" stroke="#222"><rect x="4.500" y="7.500" width="4" height="2" /><rect x="10.500" y="7.500" width="4" height="2" /><rect x="4.500" y="11.500" width="4" height="2" /><rect x="10.500" y="11.500" width="4" height="2" /></g></I></PlainButton>
      </ToolsRow>
      <Rule />
      <Rollouts>
        <RollBody>
          <SelectedInfo>18 Edges Selected</SelectedInfo>
          <RollTitle $gap={6}><RollHead><b>+</b>Soft Selection</RollHead></RollTitle>
          <RollTitle $gap={3}><RollHead><b>-</b>Edit Edges</RollHead></RollTitle>
          <RollGroup>
            <ButtonRow><PushButton>Insert Vertex</PushButton></ButtonRow>
            <ButtonRow><PushButton>Remove</PushButton><PushButton>Split</PushButton></ButtonRow>
            <ButtonRow $gap={3}><WithSettings n="Extrude" /><WithSettings n="Weld" /></ButtonRow>
            <ButtonRow $gap={6}><WithSettings n="Chamfer" /><PushButton>Target Weld</PushButton></ButtonRow>
            <ButtonRow><WithSettings n="Bridge" /><WithSettings n="Connect" marked /></ButtonRow>
            <ButtonRow><PushButton>Create Shape From Selection</PushButton></ButtonRow>
            <WeightBox>
              <label htmlFor="weight">Weight:</label>
              <Weights><NumInput id="weight" $w={56} defaultValue="1,0" /><Spinner /></Weights>
              <label htmlFor="crease">Crease:</label>
              <Weights><NumInput id="crease" $w={56} defaultValue="0,0" /><Spinner /></Weights>
            </WeightBox>
            <ButtonRow><PushButton>Edit Tri.</PushButton><PushButton>Turn</PushButton></ButtonRow>
          </RollGroup>
        </RollBody>
        <ScrollTrack><ScrollThumb /></ScrollTrack>
      </Rollouts>
    </Panel>
  );
}

/* ---------- status bar ---------- */

const Status = styled.footer`
  display: flex;
  flex: none;
  height: 50px;
  padding-top: 2px;
  border-top: 1px solid #b0b0b0;
`;
const Listener = styled.div`
  display: grid;
  grid-template-rows: 22px 23px;
  gap: 1px;
  flex: none;
  width: 98px;
  padding-left: 2px;
`;
const ListenerLine = styled.input<{ $bg: string }>`
  width: 100%;
  background: ${(p) => p.$bg};
  border: 2px solid;
  border-color: ${c.dark} #f4f4ec #f4f4ec ${c.dark};
`;
const Splitter = styled.span`
  flex: none;
  width: 4px;
  margin: 0 2px 0 3px;
  border: 1px solid ${c.dark};
  border-width: 0 1px;
`;
const Info = styled.div`
  display: grid;
  grid-template: 22px 22px / minmax(0, 1fr) 100px;
  gap: 3px 2px;
  flex: 1 1 0;
  min-width: 0;
`;
const Cell = styled.div<{ $w?: number }>`
  ${sunken}
  flex: ${(p) => (p.$w ? "none" : "1 1 0")};
  width: ${(p) => (p.$w ? p.$w + "px" : "auto")};
  min-width: 0;
  height: 21px;
  padding: 4px 0 0 5px;
  overflow: hidden;
  white-space: nowrap;
`;
const InfoRow = styled.div`
  display: flex;
  align-items: center;
  min-width: 0;
`;
const Coord = styled.label`
  display: flex;
  align-items: center;
  justify-content: flex-end;
  flex: none;
  gap: 2px;
  width: 82px;
  font-size: 12px;
  &:first-of-type { width: 71px; }
`;
const CoordInput = styled.input`
  width: 58px;
  height: 21px;
  background: ${c.field};
  border: 1px solid;
  border-color: #222 ${c.light} ${c.light} #222;
`;
const KeyArea = styled.div`
  display: grid;
  grid-template: 22px 22px / 44px 48px 116px;
  gap: 1px 3px;
  flex: none;
  margin-left: 2px;
`;
const KeyButton = styled.button<{ $tall?: boolean }>`
  ${raised}
  display: flex;
  align-items: center;
  justify-content: center;
  grid-row: ${(p) => (p.$tall ? "1 / 3" : "auto")};
  min-width: 0;
  background: ${c.face};
  overflow: hidden;
`;
const Filters = styled.div`
  display: grid;
  grid-template-columns: 26px 1fr;
`;
const SelRow = styled.div`
  display: flex;
  margin-right: -2px;
`;
const Playback = styled.div`
  display: flex;
  flex-direction: column;
  flex: none;
  width: 125px;
  margin-left: 5px;
`;
const PlayRow = styled.div`
  display: flex;
  align-items: center;
  height: 22px;
  &:last-child { height: 24px; }
`;
const FrameInput = styled.input`
  width: 65px;
  height: 21px;
  margin: 0 1px 0 2px;
  padding: 0 3px;
  font-size: 12px;
  background: ${c.field};
  border: 2px solid;
  border-color: #222 ${c.light} ${c.light} #222;
`;
const Nav = styled.div`
  display: grid;
  grid-template: 22px 22px / repeat(4, 23px);
  align-items: center;
  flex: none;
  width: 98px;
  padding-left: 1px;
  border-left: 1px solid ${c.dark};
`;
const Taskbar = styled.div`
  display: grid;
  grid-template-columns: 100px 1fr 129px;
  flex: none;
  height: 2px;
  background: #3169d6;
  &::before { content: ""; background: #3c8f3c; }
  &::after { content: ""; grid-column: 3; background: #1d9ae8; }
`;
const Dish = ({ fade }: { fade?: boolean }) => (
  <svg width="14" height="14" viewBox="0 0 14 14" fill="none" opacity={fade ? 0.45 : 1}>
    <path d="M1 1c6-1 11 4 10 10C5 11 0 7 1 1z" fill="#8da6cf" stroke="#4a6590" />
    <path d="M2 2c4 1 7 4 8 8" stroke="#e8f0ff" strokeWidth="1.500" />
    <path d="M6 7l5-5M4 9l-2 4h7l-3-3" stroke="#4a6590" fill="#b8c6de" />
    <circle cx="11.500" cy="2" r="1.500" fill="#dce6f8" stroke="#4a6590" />
  </svg>
);
const Lens = ({ x = 0, y = 0, k = 1 }: { x?: number; y?: number; k?: number }) => (
  <g transform={`translate(${x} ${y}) scale(${k})`}><path d="M8 8l6 6" stroke="#224" strokeWidth="2.500" /><circle cx="5.500" cy="5.500" r="4.500" fill="#dfe7f5" stroke="#334" /></g>
);

function StatusBar() {
  return (
    <Status>
      <Listener>
        <ListenerLine $bg="#dfc1c3" aria-label="Macro recorder" />
        <ListenerLine $bg="#fff" aria-label="Script listener" />
      </Listener>
      <Splitter />
      <Info>
        <InfoRow>
          <Cell $w={72}>1 Object Sele</Cell>
          <PlainButton $w={26} aria-label="Lock selection"><I s={9} h={12}><path d="M2.500 5V2.500c0-2 4-2 4 0V5" stroke="#000" /><path d="M0 5h9v2H0zM0 8h9v1H0zM0 10h9v2H0z" fill="#000" /></I></PlainButton>
          <PlainButton $w={29} aria-label="Transform type-in"><I s={15}><path d="M.5 .5h14v14H.5zM7.500 1v13M1 7.500h13" stroke="#222" /><circle cx="7.500" cy="7.500" r="2.500" fill="#222" /></I></PlainButton>
          {["X", "Y", "Z"].map((n) => (
            <Coord key={n}>{n}:<CoordInput /></Coord>
          ))}
        </InfoRow>
        <Cell>Grid = 2,54m</Cell>
        <InfoRow>
          <Cell>Click or click-and-drag to select objects</Cell>
          <Divider $h={18} />
          <PlainButton aria-label="Communication Center"><Dish fade /></PlainButton>
        </InfoRow>
        <Cell>Add Time Tag</Cell>
      </Info>
      <KeyArea>
        <KeyButton $tall aria-label="Set keys"><I s={26} h={12}><circle cx="5" cy="6" r="4" stroke="#000" strokeWidth="2" /><path d="M9 6h15M18 6v4M22 6v4" stroke="#000" strokeWidth="2.500" /></I></KeyButton>
        <KeyButton>Auto Key</KeyButton>
        <SelRow><Drop label="Key set" value="Selected" h={22} /></SelRow>
        <KeyButton>Set Key</KeyButton>
        <Filters>
          <PlainButton aria-label="Default tangents"><I s={17} h={16}><path d="M1 12l2 3L9 3l3-2 4 9" stroke="#c33" strokeWidth="1.400" /><path d="M0 14.500h6M6 1.500h9" stroke="#44a" /></I></PlainButton>
          <KeyButton>Key Filters...</KeyButton>
        </Filters>
      </KeyArea>
      <Playback>
        <PlayRow>
          <PlainButton $w={25} aria-label="Go to start"><I s={17} h={10}><path d="M1 0v10" stroke="#000" strokeWidth="2" /><path d="M9 0v10L2 5zM16 0v10L9 5z" fill="#000" /></I></PlainButton>
          <Divider $h={16} />
          <PlainButton aria-label="Previous frame"><I s={13} h={8}><path d="M6 0v8L0 4z" fill="#000" /><path d="M8 0v8M11 0v8" stroke="#000" strokeWidth="2" /></I></PlainButton>
          <PlainButton aria-label="Play"><I s={16}><path d="M1 1h14v14H1z" stroke="#000" strokeWidth="2" /><path d="M5 3v10l7-5z" fill="#000" /></I></PlainButton>
          <PlainButton aria-label="Next frame"><I s={13} h={8}><path d="M7 0v8l6-4z" fill="#000" /><path d="M2 0v8M5 0v8" stroke="#000" strokeWidth="2" /></I></PlainButton>
          <Divider $h={16} />
          <PlainButton $w={18} aria-label="Go to end"><I s={17} h={10}><path d="M16 0v10" stroke="#000" strokeWidth="2" /><path d="M8 0v10l7-5zM1 0v10l7-5z" fill="#000" /></I></PlainButton>
        </PlayRow>
        <PlayRow>
          <PlainButton $w={24} aria-label="Key mode"><I s={12} h={8}><path d="M1 0v8M11 0v8" stroke="#000" /><path d="M6 0v8L2 4zM10 0v8L6 4z" fill="#000" /></I></PlainButton>
          <FrameInput aria-label="Current frame" defaultValue="0" />
          <Spinner />
          <PlainButton aria-label="Time configuration"><I s={14} h={13}><path d="M.5 .5h11v10H.5z" stroke="#333" /><path d="M0 1.500h12" stroke="#333" strokeWidth="2" /><circle cx="9" cy="8" r="4" fill="#ddd" stroke="#a22" /><path d="M9 5v3h2" stroke="#a22" /></I></PlainButton>
        </PlayRow>
      </Playback>
      <Nav>
        <PlainButton aria-label="Zoom"><I s={15}><Lens /></I></PlainButton>
        <PlainButton aria-label="Zoom all"><I s={16}><path d="M5.500 1.500h10v9h-10zM10.500 1v10M5 6h10" stroke="#a22" /><Lens y={5} k={0.7} /></I></PlainButton>
        <PlainButton aria-label="Zoom extents"><I s={16}><path d="M0 3V0h3M13 0h3v3M0 13v3h3M13 16h3v-3" stroke="#000" /><path d="M3.500 5.500l3-3h7v7l-3 3h-7z" fill="#8d97cc" stroke="#224" /><path d="M3.500 5.500h7v7M10.500 5.500l3-3" stroke="#224" /></I></PlainButton>
        <PlainButton aria-label="Zoom extents all"><I s={16}><path d="M5.500 .5h10v9h-10zM10.500 0v10M5 5h10" stroke="#a22" /><path d="M.5 7.500l2-2h7v7l-2 2h-7z" fill="#fff" stroke="#226" /></I></PlainButton>
        <PlainButton aria-label="Region zoom"><I s={16}><rect x=".5" y=".5" width="15" height="15" fill="#e8e8e8" stroke="#000" strokeDasharray="2 1" /><Lens x={2} y={2} k={0.85} /></I></PlainButton>
        <PlainButton aria-label="Pan"><I s={17} h={16}><path d="M5 15L1 9c-1-2 1-2 3 0L3 4c0-2 2-1 3 3V2c0-2 2-1 2 0l1 5V2c1-1 2-1 2 1v5l2-4c2 0 1 2 0 5l-2 6z" fill="#eee" stroke="#333" /></I></PlainButton>
        <PlainButton aria-label="Arc rotate"><I s={17} h={16}><circle cx="8" cy="9" r="4.500" fill="#f5e23a" stroke="#555" /><path d="M7 0v8l-6 6M7 8l9 2" stroke="#224" strokeWidth="1.400" /></I></PlainButton>
        <PlainButton aria-label="Maximize viewport"><I s={16}><path d="M.5 .5h10v10H.5zM10.500 6.500h5v9h-9v-5" stroke="#226" /><path d="M3 3l9 9M3 3h3M3 3v3M12 12V9M12 12H9" stroke="#000" /></I></PlainButton>
      </Nav>
    </Status>
  );
}

/* ---------- notification balloon ---------- */

const Balloon = styled.section`
  position: absolute;
  left: 268px;
  bottom: 38px;
  z-index: 3;
  width: 298px;
  height: 71px;
  padding: 9px 15px 0;
  background: #f3ebcb;
  border: 1px solid #000;
  border-radius: 12px;
`;
const Tail = styled.svg`
  position: absolute;
  left: 173px;
  top: 69px;
`;
const BalloonHead = styled.h2`
  display: flex;
  align-items: center;
  gap: 4px;
  margin: 0 0 8px -6px;
  font-family: "Liberation Sans", Arial, sans-serif;
  font-size: 12px;
  line-height: 14px;
  font-weight: 700;
`;
const BalloonText = styled.p`
  margin: 0 0 4px -2px;
  > a { color: #0000f0; }
`;
const BalloonClose = styled.button`
  position: absolute;
  right: 7px;
  top: 7px;
  display: flex;
  align-items: center;
  justify-content: center;
  width: 16px;
  height: 16px;
  background: ${c.face};
  border: 1px solid ${c.dark};
`;

export default function App() {
  return (
    <Window>
      <GlobalStyle />
      <ToolRow>
        <ToolGroup><Grip /><Tool n="Undo">{ic.undo}</Tool><Tool n="Redo">{ic.redo}</Tool></ToolGroup>
        <ToolGroup><Grip /><Tool n="Link">{ic.link}</Tool><Tool n="Unlink">{ic.unlink}</Tool><Tool n="Bind">{ic.bind}</Tool></ToolGroup>
        <ToolGroup>
          <Grip /><Drop label="Selection filter" value="All" w={68} />
          <Tool n="Select" on>{ic.arrow}</Tool><Tool n="Select by name">{ic.byName}</Tool><Tool n="Region" fly>{ic.region}</Tool><Tool n="Crossing">{ic.crossing}</Tool>
        </ToolGroup>
        <ToolGroup>
          <Grip /><Tool n="Move">{ic.move}</Tool><Tool n="Rotate">{ic.rotate}</Tool><Tool n="Scale" fly>{ic.scale}</Tool>
          <Drop label="Coordinate system" value="View" w={68} />
          <Tool n="Pivot" fly>{ic.pivot}</Tool><Divider /><Tool n="Manipulate">{ic.manip}</Tool><Tool n="Keyboard override">{ic.keyb}</Tool><Divider />
          <Tool n="Mirror">{ic.mirror}</Tool><Tool n="Array" fly>{ic.array}</Tool><Tool n="Align" fly>{ic.align}</Tool>
        </ToolGroup>
        <ToolGroup $grow>
          <Grip /><Tool n="Snap" on fly>{ic.snap}</Tool><Tool n="Angle snap">{ic.angle}</Tool><Tool n="Percent snap">{ic.percent}</Tool><Tool n="Spinner snap">{ic.spinner}</Tool><Divider />
          <Tool n="Snap to frozen">{ic.snow}</Tool><Tool n="Axis constraints" on>{ic.xy}</Tool><Divider /><Tool n="Grid snap">{ic.gridSnap}</Tool>
        </ToolGroup>
      </ToolRow>
      <ToolRow>
        <ToolGroup><Grip /><Tool n="Named selections">{ic.macro}</Tool><Drop label="Named selection" value="" w={119} /></ToolGroup>
        <ToolGroup>
          <Grip /><Tool n="Layers">{ic.sheets}</Tool>
          <Drop label="Layer" value="0 (default)" w={205} h={23}>
            <I s={65} h={19}>
              <path d="M3 9c4-6 10-6 13 0-3 6-9 6-13 0z" fill="#fff" stroke="#222" /><circle cx="9.500" cy="9" r="3" fill="#8a8420" stroke="#222" />
              <Cursor x={21} y={3} k={0.7} />
              <g transform="translate(32 3) scale(.75)"><Teapot fill="#1d9a2c" /></g>
              <rect x="54.500" y="4.500" width="9" height="9" fill="#5858e0" stroke="#111" />
            </I>
          </Drop>
          <Tool n="New layer">{ic.newLayer}</Tool><Tool n="Add to layer">{ic.plus}</Tool><Tool n="Select layer objects">{ic.pickLayer}</Tool><Tool n="Set current layer">{ic.curLayer}</Tool>
        </ToolGroup>
        <ToolGroup>
          <Grip /><Tool n="Layer manager">{ic.sheets}</Tool><Divider /><Tool n="Curve editor">{ic.curves}</Tool><Tool n="Schematic view">{ic.schematic}</Tool><Divider /><Tool n="Material editor">{ic.material}</Tool>
        </ToolGroup>
        <ToolGroup><Grip /><Tool n="Render setup">{ic.render}</Tool><Drop label="Render view" value="View" w={78} /><Tool n="Quick render" fly>{ic.teapot}</Tool></ToolGroup>
        <ToolGroup $grow>
          <Grip /><Tool n="Preset A">{preset("A")}</Tool><Tool n="Preset B">{preset("B")}</Tool><Tool n="Preset C">{preset("C")}</Tool><Divider />
          <SelectBox $h={22}><I s={60} h={18}><path d="M2 9.500h58" stroke="#222" strokeDasharray="2 1" /></I></SelectBox>
        </ToolGroup>
      </ToolRow>

      <Work>
        <SideBar>
          <SideGrip />
          <SideButton aria-label="PSD render"><I s={24} h={26}><text x="1" y="9" fontSize="10" fontWeight="700" fill="#fff" stroke="#333" strokeWidth=".7">PSD</text><Teapot y={10} /></I></SideButton>
          <SideButton aria-label="Render elements"><I s={22} h={20}><rect x=".5" y=".5" width="21" height="19" fill="#cdd4e4" stroke="#111" /><path d="M1 2h20" stroke="#5478c8" strokeWidth="3" /><circle cx="7" cy="12" r="4" fill="#55a0b0" /><path d="M11 6l2 6 3-6z" fill="#5660a8" /><path d="M13 16l3-8 4 8z" fill="#c9704c" /></I></SideButton>
          <SideButton aria-label="Render output"><I s={20} h={22}><rect x=".5" y=".5" width="19" height="21" fill="#c9cfd6" stroke="#77808a" /><path d="M2 2.500h12" stroke="#456" strokeWidth="2" /><rect x="3" y="5" width="10" height="6" fill="#fff" stroke="#99a" /><path d="M3 14h6m2 0h6M3 17h6m2 0h6M16 5v6" stroke="#7a848e" /></I></SideButton>
          <SideButton aria-label="PSD remove"><I s={24} h={26}><text x="1" y="9" fontSize="10" fontWeight="700" fill="#fff" stroke="#333" strokeWidth=".7">PSD</text><Teapot y={10} fill="#5b7278" /><path d="M4 5l17 15M21 5L4 22" stroke="#dd4848" strokeWidth="2.500" /></I></SideButton>
        </SideBar>

        <Center>
          <Views>
            <TopView />
            <CameraView />
            <LeftView />
            <PerspectiveView />
          </Views>
          <ConnectDialog />
          <Slider>
            <SliderButton $w={16} aria-label="Previous">&lt;</SliderButton>
            <SliderButton $w={124}>0 / 100</SliderButton>
            <SliderButton $w={15} aria-label="Next">&gt;</SliderButton>
          </Slider>
          <TrackBar>
            <CurveToggle aria-label="Open mini curve editor"><I s={17}><path d="M.5 .5h16v4H.5zM.5 12.500h16v3H.5zM4.500 6v5M12.500 6v5M3 8l1.500-2L6 8M11 9l1.500 2L14 9" stroke="#000" /><path d="M1 3l4-1 4 2 3-2 4 1" stroke="#000" /></I></CurveToggle>
            <TimeRuler />
          </TrackBar>
        </Center>

        <CommandPanel />
      </Work>

      <StatusBar />
      <Taskbar />

      <Balloon role="status">
        <BalloonHead><Dish />Communication Center</BalloonHead>
        <BalloonText>There is new data available.</BalloonText>
        <BalloonText><a href="#news">Click here.</a></BalloonText>
        <BalloonClose aria-label="Dismiss"><svg width="8" height="8" viewBox="0 0 8 8"><path d="M1 1l6 6m0-6L1 7" stroke="#000" strokeWidth="2" /></svg></BalloonClose>
        <Tail width="28" height="28" viewBox="0 0 28 28"><path d="M0 0v1l26 25V0z" fill="#f3ebcb" /><path d="M0 .5l25.500 24V0" fill="none" stroke="#000" /></Tail>
      </Balloon>
    </Window>
  );
}
